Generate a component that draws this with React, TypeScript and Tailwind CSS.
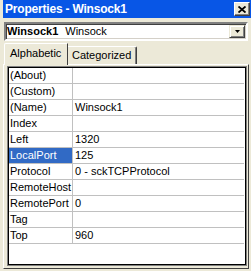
import React from 'react';

const ROWS: { name: string; value: string; selected?: boolean }[] = [
  { name: '(About)', value: '' },
  { name: '(Custom)', value: '' },
  { name: '(Name)', value: 'Winsock1' },
  { name: 'Index', value: '' },
  { name: 'Left', value: '1320' },
  { name: 'LocalPort', value: '125', selected: true },
  { name: 'Protocol', value: '0 - sckTCPProtocol' },
  { name: 'RemoteHost', value: '' },
  { name: 'RemotePort', value: '0' },
  { name: 'Tag', value: '' },
  { name: 'Top', value: '960' },
];

export default function App() {
  return (
    <div className="w-[251px] h-[271px] overflow-hidden bg-[#ECE9D8] text-[11px] text-black font-['Liberation_Sans',Arial,sans-serif]">
      {/* Title bar */}
      <div className="ml-[3px] h-[18px] bg-[#0856e6] flex items-center justify-between">
        <span className="pl-[2px] text-[12px] leading-[14px] font-bold text-white tracking-[-0.2px]">
          Properties - Winsock1
        </span>
        <button className="mr-[1px] w-[16px] h-[14px] bg-[#ECE9D8] border border-t-white border-l-white border-r-[#404040] border-b-[#404040] shadow-[inset_-1px_-1px_0_#808080] flex items-center justify-center">
          <svg width="8" height="7" viewBox="0 0 8 7">
            <path d="M0.5 0.5 L7.5 6.5 M7.5 0.5 L0.5 6.5" stroke="#000" strokeWidth="1.8" fill="none" />
          </svg>
        </button>
      </div>

      {/* Object combo */}
      <div className="mt-[4px] ml-[4px] mr-[3px] h-[19px] bg-white border-2 border-t-[#808080] border-l-[#808080] border-b-white border-r-white shadow-[inset_1px_1px_0_#404040,inset_-1px_-1px_0_#d4d0c8] flex items-stretch">
        <div className="flex-1 flex items-center gap-[7px] pl-[1px] leading-[15px]">
          <span className="font-bold">Winsock1</span>
          <span>Winsock</span>
        </div>
        <div className="w-[16px] mt-[1px] mb-[1px] mr-[1px] bg-[#ECE9D8] border border-t-[#ECE9D8] border-l-[#ECE9D8] border-r-[#404040] border-b-[#404040] shadow-[inset_1px_1px_0_#fff,inset_-1px_-1px_0_#808080] flex items-center justify-center">
          <svg width="5" height="3" viewBox="0 0 5 3">
            <path d="M0 0 H5 L2.5 3 Z" fill="#000" />
          </svg>
        </div>
      </div>

      {/* Tabs + panel */}
      <div className="mt-[2px] ml-[3px] mr-[2px]">
        <div className="h-[21px] flex items-end pl-[1px] relative z-10">
          <div className="h-[22px] -mb-px w-[64px] bg-[#ECE9D8] border-t border-l border-r border-t-white border-l-white border-r-[#404040] rounded-tl-[2px] pl-[5px] pt-[3px] leading-[13px]">
            Alphabetic
          </div>
          <div className="h-[18px] w-[69px] border-t border-r border-t-white border-r-[#404040] shadow-[inset_-1px_0_0_#808080] rounded-tr-[2px] pl-[4px] pt-[2px] leading-[13px]">
            Categorized
          </div>
        </div>
        <div className="h-[205px] border border-t-white border-l-white border-r-[#404040] border-b-[#404040] pt-[1px] pl-[3px] pr-[1px] pb-[2px]">
          {/* Property grid */}
          <div className="h-[200px] border border-[#808080]">
            <div className="h-full border border-black bg-white">
              {ROWS.map((row) => (
                <div key={row.name} className="h-[16px] flex border-b border-[#c0c0c0] mr-[1px] leading-[15px]">
                  <div
                    className={`w-[63px] pl-[1px] whitespace-nowrap overflow-hidden ${
                      row.selected ? 'bg-[#316AC5] text-white' : ''
                    }`}
                  >
                    {row.name}
                  </div>
                  <div className="w-px bg-[#c0c0c0]" />
                  <div className="flex-1 pl-[2px] whitespace-nowrap">{row.value}</div>
                </div>
              ))}
            </div>
          </div>
        </div>
      </div>
    </div>
  );
}
